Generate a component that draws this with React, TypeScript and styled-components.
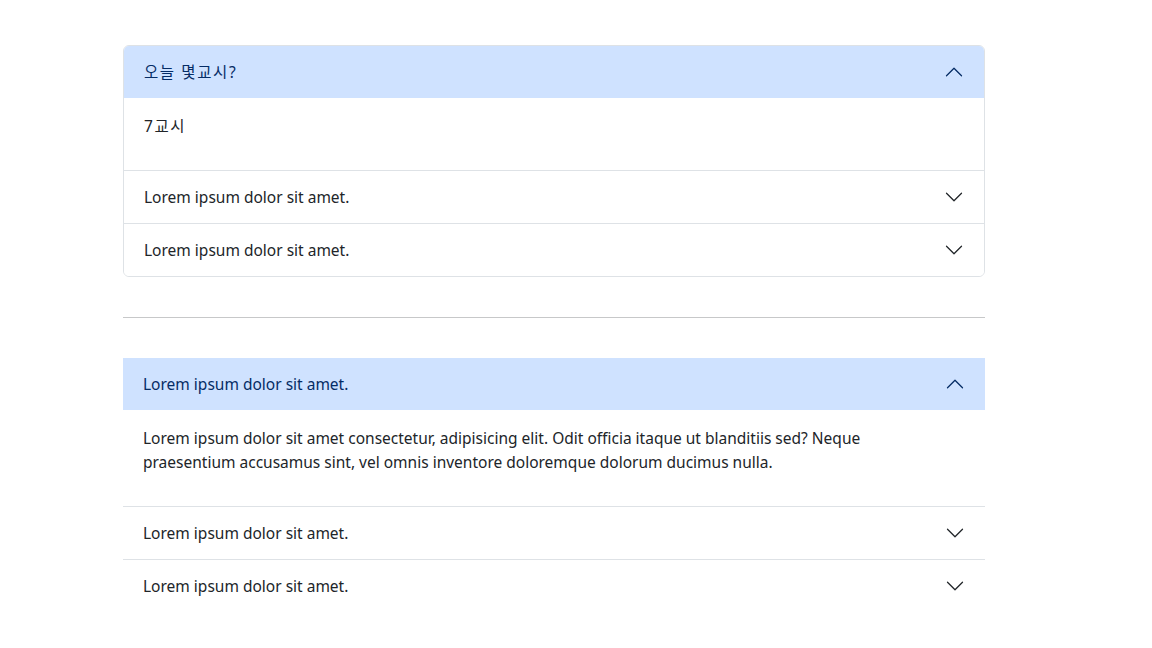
import React, { useState } from "react";
import styled, { createGlobalStyle, css } from "styled-components";

const Global = createGlobalStyle`
  html, body { margin: 0; padding: 0; background: #fff; }
  body {
    font-family: "Noto Sans", "Noto Sans CJK KR", sans-serif;
    font-size: 15.5px;
    line-height: 24px;
    color: #212529;
  }
  * { box-sizing: border-box; }
  :lang(ko) { letter-spacing: 1.6px; }
`;

const Page = styled.div`
  width: 862px;
  margin: 45px 0 0 123px;
`;

const Accordion = styled.div<{ $flush?: boolean }>`
  display: flex;
  flex-direction: column;
  ${(p) =>
    !p.$flush &&
    css`
      border: 1px solid #dee2e6;
      border-radius: 6px;
      overflow: hidden;
    `}
`;

const Item = styled.div`
  display: flex;
  flex-direction: column;
  & + & {
    border-top: 1px solid #dee2e6;
  }
`;

const Header = styled.button<{ $open: boolean }>`
  display: flex;
  align-items: center;
  width: 100%;
  height: 52px;
  padding: 0 20px;
  border: 0;
  margin: 0;
  font: inherit;
  line-height: 20px;
  text-align: left;
  cursor: pointer;
  background: ${(p) => (p.$open ? "#cfe2ff" : "#fff")};
  color: ${(p) => (p.$open ? "#052c65" : "#212529")};
`;

const Title = styled.span`
  flex: 1;
`;

const Chevron = styled.svg<{ $open: boolean }>`
  width: 20px;
  height: 20px;
  flex-shrink: 0;
  transform: ${(p) => (p.$open ? "rotate(-180deg)" : "none")};
`;

const Body = styled.div`
  padding: 16px 20px;
  & p {
    margin: 0 0 16px;
    max-width: 800px;
  }
`;

const Rule = styled.hr`
  margin: 40px 0;
  border: 0;
  border-top: 1px solid #212529;
  opacity: 0.25;
`;

type Entry = { title: string; body: string; lang?: string };

function AccordionBlock({ items, flush }: { items: Entry[]; flush?: boolean }) {
  const [open, setOpen] = useState<number>(0);
  return (
    <Accordion $flush={flush}>
      {items.map((it, i) => {
        const isOpen = open === i;
        return (
          <Item key={i}>
            <Header $open={isOpen} onClick={() => setOpen(isOpen ? -1 : i)}>
              <Title lang={it.lang}>{it.title}</Title>
              <Chevron
                $open={isOpen}
                viewBox="0 0 16 16"
                fill="none"
                stroke={isOpen ? "#052c65" : "#212529"}
                strokeLinecap="round"
                strokeLinejoin="round"
              >
                <path d="M2 5L8 11L14 5" />
              </Chevron>
            </Header>
            {isOpen && (
              <Body>
                <p lang={it.lang}>{it.body}</p>
              </Body>
            )}
          </Item>
        );
      })}
    </Accordion>
  );
}

const lorem = "Lorem ipsum dolor sit amet.";
const long =
  "Lorem ipsum dolor sit amet consectetur, adipisicing elit. Odit officia itaque ut blanditiis sed? Neque praesentium accusamus sint, vel omnis inventore doloremque dolorum ducimus nulla.";

export default function App() {
  return (
    <>
      <Global />
      <Page>
        <AccordionBlock
          items={[
            { title: "오늘 몇교시?", body: "7교시", lang: "ko" },
            { title: lorem, body: long },
            { title: lorem, body: long },
          ]}
        />
        <Rule />
        <AccordionBlock
          flush
          items={[
            { title: lorem, body: long },
            { title: lorem, body: long },
            { title: lorem, body: long },
          ]}
        />
      </Page>
    </>
  );
}
